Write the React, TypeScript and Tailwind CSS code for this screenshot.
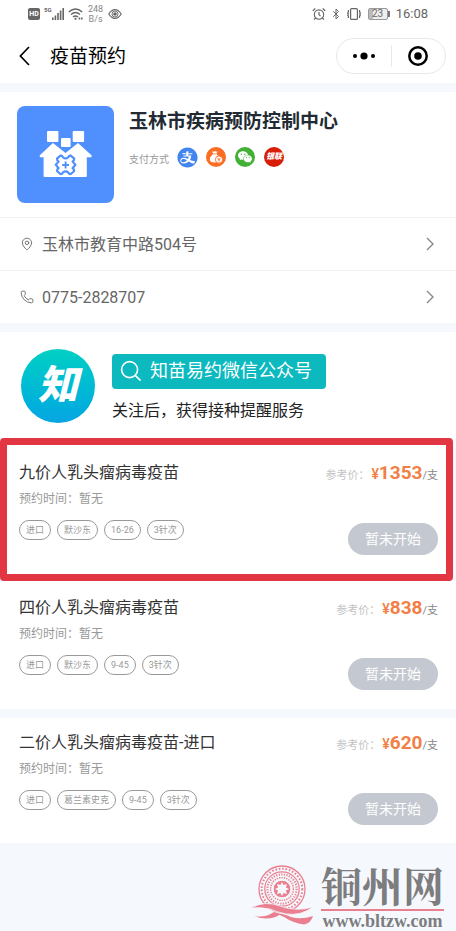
import React from 'react';
import { Bluetooth, MapPin, Phone, AlarmClock } from 'lucide-react';
import { AiFillAlipayCircle, AiFillWechat } from 'react-icons/ai';

interface Vaccine {
  name: string;
  time: string;
  tags: string[];
  price: number;
}

const VACCINES: Vaccine[] = [
  { name: '九价人乳头瘤病毒疫苗', time: '暂无', tags: ['进口', '默沙东', '16-26', '3针次'], price: 1353 },
  { name: '四价人乳头瘤病毒疫苗', time: '暂无', tags: ['进口', '默沙东', '9-45', '3针次'], price: 838 },
  { name: '二价人乳头瘤病毒疫苗-进口', time: '暂无', tags: ['进口', '葛兰素史克', '9-45', '3针次'], price: 620 },
];

const StatusBar: React.FC = () => (
  <div className="h-7 px-7 flex items-center justify-between text-[#666]">
    <div className="flex items-center">
      <span className="w-3 h-3 rounded-xs bg-[#666] text-white text-[7px] leading-3 font-bold text-center">HD</span>
      <span className="ml-1 mb-2 text-[6px] leading-none font-bold">5G</span>
      <svg className="w-3 h-3" viewBox="0 0 12 12" fill="currentColor">
        <rect x="0" y="9.5" width="1.6" height="2.5" />
        <rect x="2.6" y="7.5" width="1.6" height="4.5" />
        <rect x="5.2" y="5" width="1.6" height="7" />
        <rect x="7.8" y="2.5" width="1.6" height="9.5" />
        <rect x="10.4" y="0" width="1.6" height="12" />
      </svg>
      <svg className="ml-1 w-4 h-3" viewBox="0 0 16 12" fill="none" stroke="currentColor" strokeWidth="1.4">
        <path d="M0.8 4 Q7.5 -2 14.2 4" />
        <path d="M3 6.5 Q7.5 2.5 12 6.5" />
        <path d="M5 9 Q7.5 6.8 10 9" />
        <circle cx="7.5" cy="10.8" r="1.1" fill="currentColor" stroke="none" />
        <path d="M10.6 10.6h1.6M13 10.6h1.6" strokeWidth="2" />
      </svg>
      <span className="ml-1 w-4 text-[9px] leading-[10px] text-center text-[#888]">248 B/s</span>
      <svg className="ml-1 w-3.5 h-3" viewBox="0 0 14 12" fill="none" stroke="currentColor">
        <path d="M0.8 6 Q3.4 1.6 7 1.6 T13.2 6 Q10.6 10.4 7 10.4 T0.8 6 Z" strokeWidth="1.1" />
        <circle cx="7" cy="6" r="3" strokeWidth="0.9" />
        <circle cx="7" cy="6" r="1.8" fill="currentColor" stroke="none" />
      </svg>
    </div>
    <div className="flex items-center gap-1">
      <AlarmClock className="w-3.5 h-3.5" strokeWidth={2} />
      <Bluetooth className="w-3 h-3" strokeWidth={2} />
      <svg className="w-4 h-3" viewBox="0 0 16 12" fill="none" stroke="currentColor" strokeWidth="1.2">
        <rect x="4.6" y="0.6" width="6.8" height="10.8" rx="1" />
        <path d="M2.4 2v2l-0.8 1l0.8 1l-0.8 1l0.8 1v2M13.6 2v2l0.8 1l-0.8 1l0.8 1l-0.8 1v2" />
      </svg>
      <span className="ml-0.5 flex items-center">
        <span className="w-5 h-3 rounded-xs border border-[#999] bg-linear-to-r from-[#bbb] from-25% to-[#eee] to-25% text-[10px] leading-[10px] text-center">23</span>
        <span className="w-0.5 h-1.5 bg-[#777]" />
      </span>
      <span className="ml-0.5 text-[13px] leading-4">16:08</span>
    </div>
  </div>
);

const NavBar: React.FC = () => (
  <header className="h-[55px] pl-[19px] pr-2.5 flex items-center justify-between">
    <div className="flex items-center gap-5 text-black">
      <button type="button" aria-label="返回">
        <svg className="w-[11px] h-5" viewBox="0 0 11 20" fill="none" stroke="currentColor" strokeWidth="1.7">
          <path d="M10 1 L1.4 10 L10 19" />
        </svg>
      </button>
      <h1 className="pt-0.5 text-[19px] leading-7">疫苗预约</h1>
    </div>
    <div className="w-[110px] h-9 rounded-full border border-[#e8e8e8] flex items-center">
      <button type="button" aria-label="更多" className="flex-1 flex justify-center">
        <svg className="w-[22px] h-2" viewBox="0 0 22 8">
          <circle cx="2" cy="4" r="2" />
          <circle cx="11" cy="4" r="3.6" />
          <circle cx="20" cy="4" r="2" />
        </svg>
      </button>
      <span className="w-px h-[22px] bg-[#e8e8e8]" />
      <button type="button" aria-label="关闭" className="flex-1 flex justify-center">
        <svg className="w-5 h-5" viewBox="0 0 20 20">
          <circle cx="10" cy="10" r="8.7" fill="none" stroke="#000" strokeWidth="2.5" />
          <circle cx="10" cy="10" r="3.8" />
        </svg>
      </button>
    </div>
  </header>
);

const ClinicLogo: React.FC = () => (
  <svg className="w-[97px] h-[97px] shrink-0" viewBox="0 0 97 97">
    <rect width="97" height="97" rx="8" fill="#5090fe" />
    <g fill="#fff">
      <rect x="30" y="25" width="11.4" height="11" rx="1" />
      <rect x="55.7" y="25" width="11.4" height="11" rx="1" />
      <rect x="44" y="32" width="9.6" height="9" rx="1" />
      <path d="M36 37 L48.5 47 L61 37 L74.5 49.2 V51.2 H69.8 V70 Q69.8 71 68.8 71 H27.6 Q26.6 71 26.6 70 V51.2 H22.8 V49.2 Z" />
    </g>
    {/* vaccine flower with a cross inside */}
    <g fill="none" stroke="#5090fe" strokeWidth="2.2">
      <path d="M43.4 49.6 Q45 49.2 46 51.2 Q48.6 53.6 51.2 51.2 Q52.2 49.2 53.8 49.6 L57.2 52.6 Q57.4 54.4 55.6 55.6 L58.4 58.8 L55.6 62.2 Q57.4 63.6 57.2 65 L53.8 68 Q52.2 68.4 51.2 66.4 Q48.6 64.2 46 66.4 Q45 68.4 43.4 68 L40 65 Q39.8 63.6 41.6 62.2 L38.8 58.8 L41.6 55.6 Q39.8 54.4 40 52.6 Z" strokeLinejoin="round" />
      <path d="M48.6 55.6 V62.4 M45.2 59 H52" strokeWidth="1.9" />
    </g>
  </svg>
);

const PayMethods: React.FC = () => (
  <div className="flex items-center gap-[9px]">
    <span className="w-5 h-5 flex items-center justify-center">
      <AiFillAlipayCircle className="w-[23px] h-[23px] shrink-0 text-[#4285ee]" />
    </span>
    <svg className="w-5 h-5" viewBox="0 0 20 20">
      <circle cx="10" cy="10" r="10" fill="#fa6e23" />
      <path d="M6 4.2 L7.5 4.8 L9 4 L10.5 4.8 L11.6 4.2 L10.6 6.6 H7 Z M6.8 7.2 H10.8 Q14 10 13.6 13 Q13 15.4 9 15.4 Q3.6 15.4 3.8 12.2 Q4 9.6 6.8 7.2 Z" fill="#fff" />
      <circle cx="13" cy="12.6" r="3.6" fill="#fff" stroke="#fa6e23" strokeWidth="0.9" />
      <path d="M11.7 10.8 L13 12.4 L14.3 10.8 M13 12.4 V14.7 M11.7 12.8 H14.3" fill="none" stroke="#fa6e23" strokeWidth="0.8" />
    </svg>
    <span className="w-5 h-5 rounded-full bg-[#41b035] flex items-center justify-center">
      <AiFillWechat className="w-4 h-4 text-white" />
    </span>
    <span className="w-5 h-5 rounded-full bg-[#d81e06] text-white text-[8px] leading-5 font-black italic text-center whitespace-nowrap">银联</span>
  </div>
);

const ContactRow: React.FC<{ href: string; icon: React.ReactNode; text: string }> = ({ href, icon, text }) => (
  <a href={href} className="h-[53px] pl-5 pr-[22px] flex items-center text-[#666] border-t border-[#f3f3f3]">
    {icon}
    <span className="ml-2 pt-0.5 flex-1 text-base">{text}</span>
    <svg className="w-2 h-3.5" viewBox="0 0 8 14" fill="none" stroke="#888" strokeWidth="1.4">
      <path d="M1 1 L7 7 L1 13" />
    </svg>
  </a>
);

const FollowBanner: React.FC = () => (
  <section className="h-[106px] pt-0.5 px-[21px] flex items-center gap-[17px] bg-white">
    <div className="w-[74px] h-[74px] rounded-full bg-linear-to-b from-[#04d0c3] to-[#08a5e2] flex items-center justify-center">
      <span className="text-white text-[40px] leading-none font-black italic">知</span>
    </div>
    <div className="pt-1 flex flex-col gap-2">
      <button type="button" className="h-[35px] pl-2 pr-3.5 rounded-sm bg-[#0bb9bf] text-white flex items-center gap-2">
        <svg className="w-[22px] h-[22px]" viewBox="0 0 22 22" fill="none" stroke="currentColor" strokeWidth="1.6">
          <circle cx="9.6" cy="9.6" r="8" />
          <path d="M15.2 15.4 L20.6 20.6" />
        </svg>
        <span className="text-lg leading-6">知苗易约微信公众号</span>
      </button>
      <p className="pt-0.5 text-base leading-6 text-[#222]">关注后，获得接种提醒服务</p>
    </div>
  </section>
);

const VaccineCard: React.FC<{ vaccine: Vaccine }> = ({ vaccine }) => (
  <div className="flex justify-between">
    <div>
      <h3 className="text-base leading-6 text-[#333]">{vaccine.name}</h3>
      <p className="mt-1.5 text-xs leading-4 text-[#999]">预约时间：{vaccine.time}</p>
      <ul className="mt-[13px] flex gap-1.5">
        {vaccine.tags.map(tag => (
          <li key={tag} className="h-5 px-1.5 rounded-full border border-[#999] text-[9px] leading-[18px] text-[#999]">{tag}</li>
        ))}
      </ul>
    </div>
    <div className="flex flex-col items-end">
      <p className="flex items-baseline leading-6 text-[#f27f45]">
        <span className="text-[11px] text-[#c4c4c4]">参考价：</span>
        <span className="ml-0.5 text-sm leading-6 font-medium">¥</span>
        <span className="text-[19px] leading-6 font-bold">{vaccine.price}</span>
        <span className="text-[11px] text-[#888]">/支</span>
      </p>
      <button type="button" disabled className="mt-[35px] w-[90px] h-8 rounded-full bg-[#c4c8d0] text-white text-sm">暂未开始</button>
    </div>
  </div>
);

const SiteMark: React.FC = () => (
  <footer className="pt-[22px] pr-3 flex justify-end items-start gap-1.5">
    <svg className="w-16 h-[60px]" viewBox="0 0 64 60" fill="none" stroke="#ea7f90">
      <circle cx="31" cy="24" r="23" strokeWidth="1.3" />
      <circle cx="31" cy="24" r="20.3" strokeWidth="2" strokeDasharray="1.6 1.8" />
      <circle cx="31" cy="24" r="17.2" strokeWidth="1.2" />
      <circle cx="31" cy="24" r="14.6" strokeWidth="2.2" strokeDasharray="1.2 1.4" />
      <circle cx="31" cy="24" r="11.4" strokeWidth="1.4" strokeDasharray="1.4 1" />
      <circle cx="31" cy="24" r="8.8" fill="#ea7f90" stroke="#f5f8fc" strokeWidth="1" />
      <path d="M31 17 L32.6 20.1 L36 19 L34.9 22.4 L38 24 L34.9 25.6 L36 29 L32.6 27.9 L31 31 L29.4 27.9 L26 29 L27.1 25.6 L24 24 L27.1 22.4 L26 19 L29.4 20.1 Z" fill="#f5f8fc" stroke="none" />
      <path d="M0 43 Q14 35 29 41 Q45 47 62 42 Q50 51 35 49 Q26 47 19 44 Q10 42 0 43 Z" fill="#ea7f90" stroke="#f5f8fc" strokeWidth="0.8" />
      <path d="M3 51 Q14 53 23 47 L30 49 Q18 57 3 51 Z M21 48 Q32 48 40 52 Q50 55 62 51 Q60 58 53 59.5 Q42 58 33 52 Q28 49 21 48 Z" fill="#ea7f90" stroke="none" />
    </svg>
    <div className="pt-1 flex flex-col items-center text-[#7d7d7f]">
      <span className="text-[41px] leading-[38px] font-bold font-['Liberation_Serif','Noto_Serif_CJK_SC','Noto_Sans_CJK_SC',serif]">铜州网</span>
      <span className="mt-0.5 w-full h-0.5 bg-[#ea7f90]" />
      <span className="text-lg leading-5 font-bold font-['Liberation_Serif',serif]">www.bltzw.com</span>
    </div>
  </footer>
);

const App: React.FC = () => {
  const [featured, ...others] = VACCINES;

  return (
    <div className="min-h-screen w-full bg-[#f5f8fc] font-['Roboto','Noto_Sans_CJK_SC',sans-serif]">
      <div className="bg-white">
        <StatusBar />
        <NavBar />
      </div>

      <main className="mt-[9px]">
        {/* Clinic info */}
        <section className="bg-white">
          <div className="px-[17px] py-3.5 flex gap-[15px]">
            <ClinicLogo />
            <div className="pt-0.5">
              <h2 className="text-[19px] leading-7 font-bold text-[#222b33]">玉林市疾病预防控制中心</h2>
              <div className="mt-[11px] flex items-center gap-2">
                <span className="pt-1 text-[10px] text-[#999]">支付方式</span>
                <PayMethods />
              </div>
            </div>
          </div>
          <ContactRow href="#address" icon={<MapPin className="w-3.5 h-4" strokeWidth={1.5} />} text="玉林市教育中路504号" />
          <ContactRow href="tel:0775-2828707" icon={<Phone className="w-3.5 h-3.5" strokeWidth={1.5} />} text="0775-2828707" />
        </section>

        <div className="mt-[9px]">
          <FollowBanner />
        </div>

        {/* Highlighted vaccine */}
        <section className="h-[143px] mr-[3px] pl-3 pr-2 pt-4 rounded-sm border-[7px] border-[#e23742] bg-white">
          <VaccineCard vaccine={featured} />
        </section>

        <div className="flex flex-col gap-[9px]">
          {others.map((vaccine, i) => (
            <section key={vaccine.name} className={`pl-[19px] pr-[18px] bg-white ${i === 0 ? 'h-32 pt-[15px]' : 'h-[125px] pt-[13px]'}`}>
              <VaccineCard vaccine={vaccine} />
            </section>
          ))}
        </div>
      </main>

      <SiteMark />
    </div>
  );
};

export default App;
